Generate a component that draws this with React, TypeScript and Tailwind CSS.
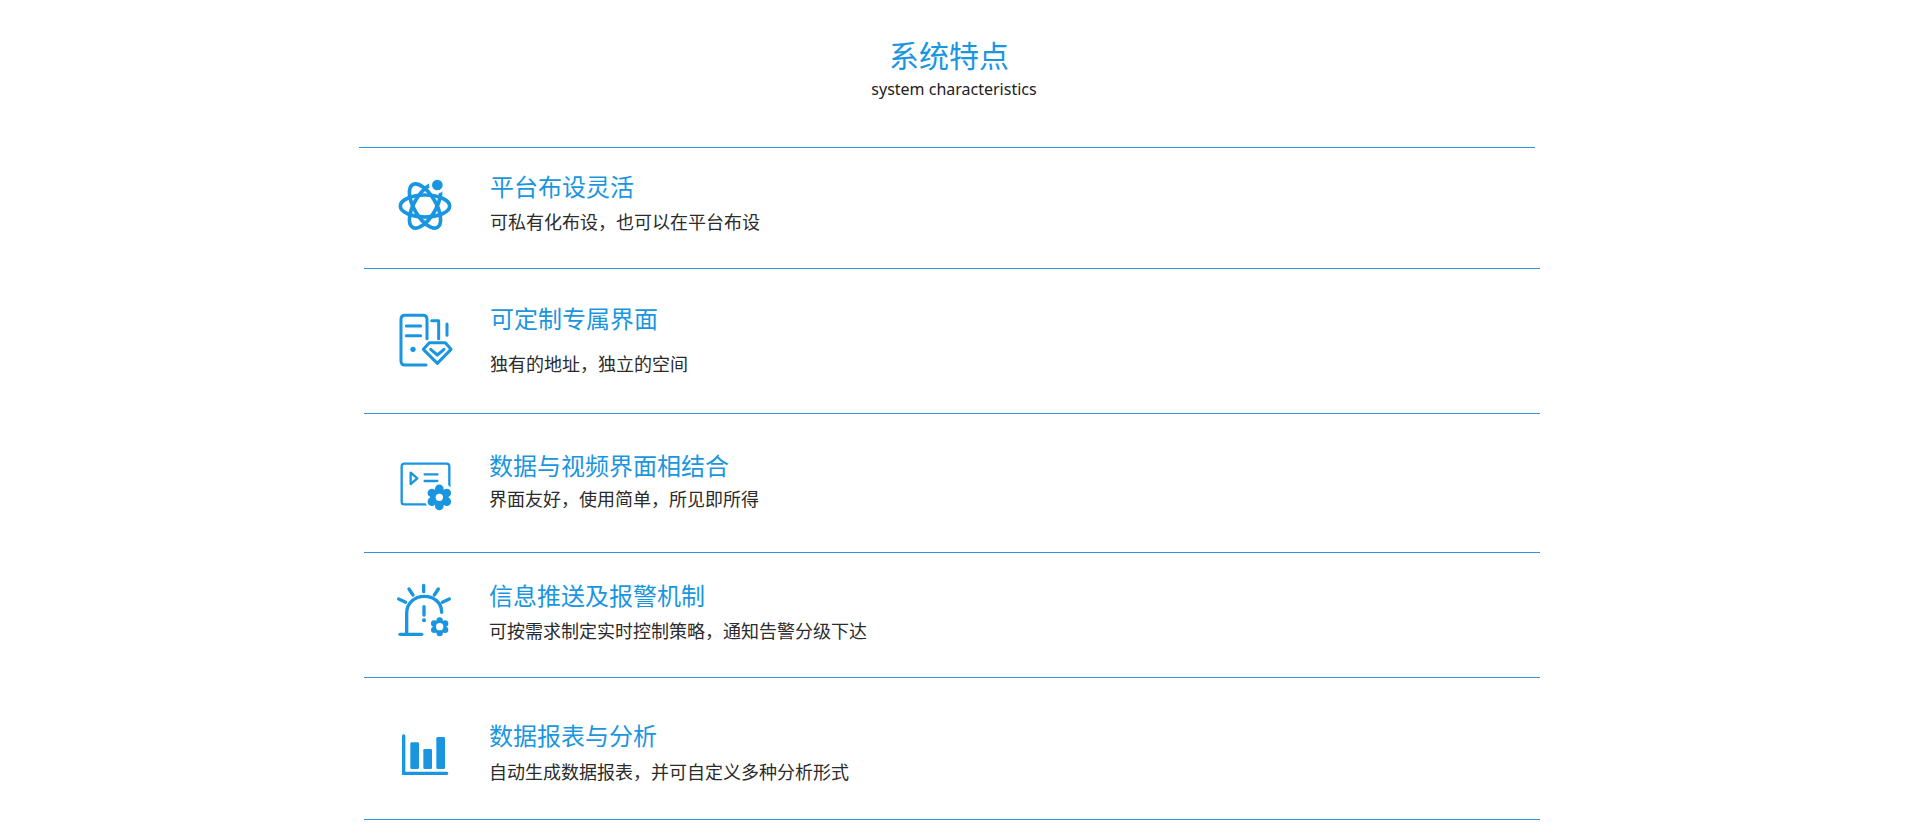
const BLUE = "#1a96e0";

function Gear({ cx, cy, r, hole }: { cx: number; cy: number; r: number; hole: number }) {
  const teeth = [30, 90, 150, 210, 270, 330];
  return (
    <g>
      <circle cx={cx} cy={cy} r={r + 7} fill="#fff" stroke="none" />
      {teeth.map((a) => (
        <circle
          key={a}
          cx={cx + Math.cos((a * Math.PI) / 180) * r * 0.68}
          cy={cy + Math.sin((a * Math.PI) / 180) * r * 0.68}
          r={r * 0.34}
          fill={BLUE}
          stroke="none"
        />
      ))}
      <circle cx={cx} cy={cy} r={r * 0.72} fill={BLUE} stroke="none" />
      <circle cx={cx} cy={cy} r={hole} fill="#fff" stroke="none" />
    </g>
  );
}

function AtomIcon() {
  return (
    <svg width="90" height="70" viewBox="0 0 270 210" fill="none" stroke={BLUE} strokeWidth="11" className="shrink-0">
      <ellipse cx="135" cy="108" rx="74" ry="33" />
      <ellipse cx="135" cy="108" rx="74" ry="33" transform="rotate(60 135 108)" />
      <ellipse cx="135" cy="108" rx="74" ry="33" transform="rotate(-60 135 108)" />
      <circle cx="172" cy="45" r="25" fill="#fff" stroke="none" />
      <circle cx="172" cy="45" r="16" fill={BLUE} stroke="none" />
    </svg>
  );
}

function DocIcon() {
  return (
    <svg width="90" height="80" viewBox="0 0 270 240" fill="none" stroke={BLUE} strokeWidth="9" strokeLinecap="round" strokeLinejoin="round" className="shrink-0">
      <path d="M141 116 V58 Q141 46 129 46 H75 Q63 46 63 58 V183 Q63 195 75 195 H138" />
      <path d="M79 78 H122 M79 107 H122" />
      <circle cx="99" cy="148" r="8" fill={BLUE} stroke="none" />
      <path d="M155 62 H176 V116 M201 72 V106" />
      <path d="M130 148 L148 128 H196 L213 148 L172 190 Z" />
      <path d="M152 148 L172 165 L192 148" />
    </svg>
  );
}

function VideoIcon() {
  return (
    <svg width="90" height="70" viewBox="0 0 270 210" fill="none" stroke={BLUE} strokeWidth="7" strokeLinejoin="round" className="shrink-0">
      <rect x="65" y="41" width="143" height="122" rx="8" />
      <path d="M92 68 V102 L112 85 Z" />
      <path d="M131 73 H175 M131 93 H175" />
      <Gear cx={178} cy={142} r={38} hole={11} />
    </svg>
  );
}

function AlarmIcon() {
  return (
    <svg width="90" height="70" viewBox="0 0 270 210" fill="none" stroke={BLUE} strokeWidth="10" strokeLinecap="round" className="shrink-0">
      <path d="M80 178 V115 C80 48 185 48 185 112" />
      <path d="M60 178 H125" />
      <path d="M131 31 V50 M87 42 L99 60 M56 72 L77 82 M175 42 L163 60 M208 72 L187 82" />
      <path d="M132 95 V120" />
      <circle cx="132" cy="136" r="6" fill={BLUE} stroke="none" />
      <Gear cx={179} cy={155} r={28} hole={11} />
    </svg>
  );
}

function ChartIcon() {
  return (
    <svg width="90" height="70" viewBox="0 0 270 210" fill="none" stroke={BLUE} strokeWidth="10" strokeLinecap="round" className="shrink-0">
      <path d="M71 48 V160 H200" />
      <g fill={BLUE} stroke="none">
        <rect x="91" y="67" width="26" height="80" rx="4" />
        <rect x="130" y="87" width="26" height="60" rx="4" />
        <rect x="169" y="51" width="26" height="96" rx="4" />
      </g>
    </svg>
  );
}

export default function App() {
  const font = "font-['Noto_Sans','Noto_Sans_CJK_SC',sans-serif]";
  const title = "text-[24px] leading-[32px] text-[#1a96e0] whitespace-nowrap";
  const desc = "text-[18px] leading-[26px] text-[#2b2b2b] whitespace-nowrap";
  return (
    <div className={`${font} h-[840px] w-[1920px] overflow-hidden bg-white`}>
      <header className="flex h-[147px] flex-col items-center pt-[36px]">
        <h1 className="ml-[-22px] text-[30px] leading-[40px] text-[#1a96e0]">系统特点</h1>
        <p className="ml-[-12px] mt-[1px] text-[16px] leading-[24px] text-[#222222]">system characteristics</p>
      </header>

      <section className="ml-[359px] flex h-[121px] w-[1176px] border-t border-[#2f96dc] pl-[21px] pt-[22px]">
        <AtomIcon />
        <div className="ml-[20px] mt-[1px]">
          <h2 className={title}>平台布设灵活</h2>
          <p className={`${desc} mt-[6px]`}>可私有化布设，也可以在平台布设</p>
        </div>
      </section>

      <section className="ml-[364px] flex h-[145px] w-[1176px] border-t border-[#2f96dc] pl-[16px] pt-[31px]">
        <DocIcon />
        <div className="ml-[20px] mt-[3px]">
          <h2 className={title}>可定制专属界面</h2>
          <p className={`${desc} mt-[16px]`}>独有的地址，独立的空间</p>
        </div>
      </section>

      <section className="ml-[364px] flex h-[139px] w-[1176px] border-t border-[#2f96dc] pl-[16px] pt-[36px]">
        <VideoIcon />
        <div className="ml-[19px] mt-[0px]">
          <h2 className={title}>数据与视频界面相结合</h2>
          <p className={`${desc} mt-[4px]`}>界面友好，使用简单，所见即所得</p>
        </div>
      </section>

      <section className="ml-[364px] flex h-[125px] w-[1176px] border-t border-[#2f96dc] pl-[16px] pt-[22px]">
        <AlarmIcon />
        <div className="ml-[19px] mt-[5px]">
          <h2 className={title}>信息推送及报警机制</h2>
          <p className={`${desc} mt-[6px]`}>可按需求制定实时控制策略，通知告警分级下达</p>
        </div>
      </section>

      <section className="ml-[364px] flex h-[142px] w-[1176px] border-t border-[#2f96dc] pl-[16px] pt-[42px]">
        <ChartIcon />
        <div className="ml-[19px] mt-[0px]">
          <h2 className={title}>数据报表与分析</h2>
          <p className={`${desc} mt-[7px]`}>自动生成数据报表，并可自定义多种分析形式</p>
        </div>
      </section>

      <div className="ml-[364px] w-[1176px] border-t border-[#2f96dc]" />
    </div>
  );
}
